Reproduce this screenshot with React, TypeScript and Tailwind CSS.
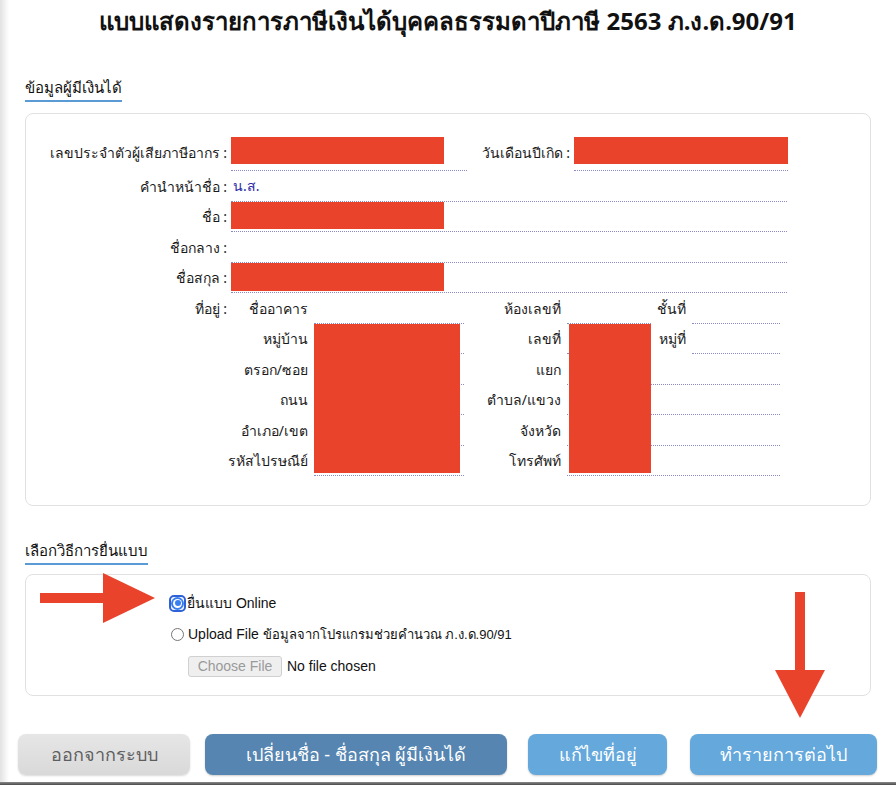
import React from 'react';

const RED = 'bg-[#e9432b]';

const Label: React.FC<{ children: React.ReactNode; className?: string }> = ({ children, className = '' }) => (
    <div className={`flex items-center justify-end whitespace-nowrap text-[14px] text-[#1a1a1a] ${className}`}>{children}</div>
);

const Dotted: React.FC<{ className?: string; children?: React.ReactNode }> = ({ className = '', children }) => (
    <div className={`border-b border-dotted border-[#8a8ac8] ${className}`}>{children}</div>
);

const SectionHeading: React.FC<{ children: React.ReactNode }> = ({ children }) => (
    <div className="flex px-[25px]">
        <span className="block border-b-2 border-[#5b9bd5] pb-[3px] text-[15px] leading-[20px] text-[#111]">{children}</span>
    </div>
);

const App: React.FC = () => {
    return (
        <div className="relative flex h-[785px] flex-col overflow-hidden bg-[linear-gradient(to_right,#e2e2e2,#ffffff_9px)] font-['Noto_Sans','DejaVu_Sans',sans-serif]">
            {/* Title */}
            <h1 className="mt-[3px] text-center text-[24px] font-bold leading-[36px] text-[#111]">
                แบบแสดงรายการภาษีเงินได้บุคคลธรรมดาปีภาษี 2563 ภ.ง.ด.90/91
            </h1>

            <div className="mt-[38px]">
                <SectionHeading>ข้อมูลผู้มีเงินได้</SectionHeading>
            </div>

            {/* Personal data card */}
            <div className="mx-[25px] mt-[11px] h-[393px] rounded-lg border border-[#e1e1e1] pt-[20px]">
                {/* Row 1 */}
                <div className="flex h-[37px]">
                    <Label className="w-[201px]">เลขประจำตัวผู้เสียภาษีอากร :</Label>
                    <Dotted className="ml-[4px] w-[236px]">
                        <div className={`mt-[3px] h-[27px] w-[213px] ${RED}`} />
                    </Dotted>
                    <Label className="w-[103px]">วันเดือนปีเกิด :</Label>
                    <Dotted className="ml-[4px] w-[214px]">
                        <div className={`mt-[3px] h-[27px] w-[214px] ${RED}`} />
                    </Dotted>
                </div>
                {/* Row 2 */}
                <div className="flex h-[30.5px]">
                    <Label className="w-[201px]">คำนำหน้าชื่อ :</Label>
                    <Dotted className="ml-[4px] flex w-[556px] items-center pl-[2px] text-[14px] text-[#2b2ba6]">น.ส.</Dotted>
                </div>
                <div className="flex h-[30.5px]">
                    <Label className="w-[201px]">ชื่อ :</Label>
                    <Dotted className="ml-[4px] w-[556px]">
                        <div className={`h-[27px] w-[213px] ${RED}`} />
                    </Dotted>
                </div>
                <div className="flex h-[30.5px]">
                    <Label className="w-[201px]">ชื่อกลาง :</Label>
                    <Dotted className="ml-[4px] w-[556px]" />
                </div>
                <div className="flex h-[30.5px]">
                    <Label className="w-[201px]">ชื่อสกุล :</Label>
                    <Dotted className="ml-[4px] w-[556px]">
                        <div className={`h-[28px] w-[213px] ${RED}`} />
                    </Dotted>
                </div>

                {/* Address */}
                <div className="grid grid-cols-[201px_4px_77px_6px_150px_97px_6px_84px_35px_6px_88px] grid-rows-[repeat(6,30.5px)]">
                    <Label className="col-start-1 row-start-1">ที่อยู่ :</Label>
                    <Label className="col-start-3 row-start-1">ชื่ออาคาร</Label>
                    <Dotted className="col-start-5 row-start-1" />
                    <Label className="col-start-6 row-start-1">ห้องเลขที่</Label>
                    <Dotted className="col-start-8 row-start-1" />
                    <Label className="col-start-9 row-start-1">ชั้นที่</Label>
                    <Dotted className="col-start-11 row-start-1" />

                    <Label className="col-start-3 row-start-2">หมู่บ้าน</Label>
                    <Dotted className="col-start-5 row-start-2" />
                    <Label className="col-start-6 row-start-2">เลขที่</Label>
                    <Dotted className="col-start-8 row-start-2" />
                    <Label className="col-start-9 row-start-2">หมู่ที่</Label>
                    <Dotted className="col-start-11 row-start-2" />

                    <Label className="col-start-3 row-start-3">ตรอก/ซอย</Label>
                    <Dotted className="col-start-5 row-start-3" />
                    <Label className="col-start-6 row-start-3">แยก</Label>
                    <Dotted className="col-span-4 col-start-8 row-start-3" />

                    <Label className="col-start-3 row-start-4">ถนน</Label>
                    <Dotted className="col-start-5 row-start-4" />
                    <Label className="col-start-6 row-start-4">ตำบล/แขวง</Label>
                    <Dotted className="col-span-4 col-start-8 row-start-4" />

                    <Label className="col-start-3 row-start-5">อำเภอ/เขต</Label>
                    <Dotted className="col-start-5 row-start-5" />
                    <Label className="col-start-6 row-start-5">จังหวัด</Label>
                    <Dotted className="col-span-4 col-start-8 row-start-5" />

                    <Label className="col-start-3 row-start-6">รหัสไปรษณีย์</Label>
                    <Dotted className="col-start-5 row-start-6" />
                    <Label className="col-start-6 row-start-6">โทรศัพท์</Label>
                    <Dotted className="col-span-4 col-start-8 row-start-6" />

                    {/* redacted blocks */}
                    <div className={`col-start-5 row-span-5 row-start-2 h-[149px] w-[146px] self-start ${RED}`} />
                    <div className={`col-start-8 row-span-5 row-start-2 ml-[2px] h-[149px] w-[82px] self-start ${RED}`} />
                </div>
            </div>

            <div className="mt-[34px]">
                <SectionHeading>เลือกวิธีการยื่นแบบ</SectionHeading>
            </div>

            {/* Submission method card */}
            <div className="mx-[25px] mt-[9px] h-[122px] rounded-lg border border-[#e1e1e1] pl-[143px] pt-[19px] font-['Liberation_Sans','Noto_Sans',sans-serif] text-[14px] text-[#111]">
                <div className="flex h-[18px] items-center">
                    <span className="flex h-[17px] w-[17px] items-center justify-center rounded-[5px] border-2 border-[#2f62d6]">
                        <span className="flex h-[13px] w-[13px] items-center justify-center rounded-full bg-[#3a7ff0]">
                            <span className="flex h-[9px] w-[9px] items-center justify-center rounded-full bg-white">
                                <span className="h-[6px] w-[6px] rounded-full bg-[#3a7ff0]" />
                            </span>
                        </span>
                    </span>
                    <span className="ml-[1px]">ยื่นแบบ Online</span>
                </div>
                <div className="mt-[13px] flex h-[18px] items-center pl-[2px]">
                    <span className="h-[13px] w-[13px] rounded-full border border-[#767676] bg-white" />
                    <span className="ml-[4px]">
                        Upload File <span className="text-[13px]">ข้อมูลจากโปรแกรมช่วยคำนวณ ภ.ง.ด.90/91</span>
                    </span>
                </div>
                <div className="mt-[13px] flex items-center pl-[19px]">
                    <span className="flex h-[21px] w-[94px] items-center justify-center rounded-[3px] border border-[#d0d0d0] bg-[#efefef] text-[14px] text-[#9a9a9a]">Choose File</span>
                    <span className="ml-[5px]">No file chosen</span>
                </div>
            </div>

            {/* Buttons */}
            <div className="mt-[38px] flex h-[41px] pl-[18px] text-[18px]">
                <button className="w-[172px] rounded-lg bg-[linear-gradient(#e6e6e6,#d9d9d9)] text-[#5e5e5e] shadow-[0_1px_2px_rgba(0,0,0,0.15)]">ออกจากระบบ</button>
                <button className="ml-[15px] w-[302px] rounded-lg bg-[#5585b0] text-white shadow-[0_1px_2px_rgba(0,0,0,0.2)]">เปลี่ยนชื่อ - ชื่อสกุล ผู้มีเงินได้</button>
                <button className="ml-[21px] w-[139px] rounded-lg bg-[#64a8dc] text-white shadow-[0_1px_2px_rgba(0,0,0,0.2)]">แก้ไขที่อยู่</button>
                <button className="ml-[23px] w-[187px] rounded-lg bg-[#64a8dc] text-white shadow-[0_1px_2px_rgba(0,0,0,0.2)]">ทำรายการต่อไป</button>
            </div>

            <div className="mt-auto h-[3px] bg-[linear-gradient(#8a8a8a,#4a4a4a)]" />

            {/* annotation arrows */}
            <svg className="pointer-events-none absolute left-0 top-0" width="896" height="785" viewBox="0 0 896 785">
                <rect x="40" y="593" width="65" height="10" fill="#e9432b" />
                <polygon points="103,573 155,598 103,623" fill="#e9432b" />
                <rect x="795" y="592" width="10" height="80" fill="#e9432b" />
                <polygon points="775,670 825,670 800,718" fill="#e9432b" />
            </svg>
        </div>
    );
};

export default App;
